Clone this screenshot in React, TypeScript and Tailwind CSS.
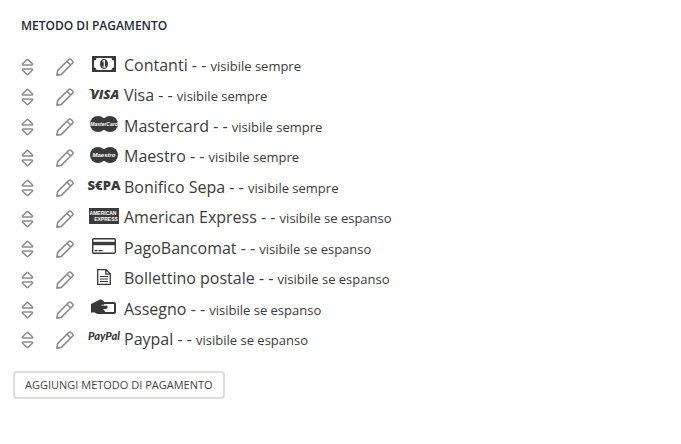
import type { ReactNode } from "react";

type Method = {
  name: string;
  visibility: string;
  icon: ReactNode;
};

const CashIcon = () => (
  <svg width="24" height="16" viewBox="0 0 24 16" aria-hidden="true">
    <rect width="24" height="16" fill="#3a3a3a" />
    <path d="M4.500 2h15a2.500 2.500 0 0 0 2.500 2.500v7a2.500 2.500 0 0 0-2.500 2.500h-15A2.500 2.500 0 0 0 2 11.500v-7A2.500 2.500 0 0 0 4.500 2z" fill="#fff" />
    <ellipse cx="12" cy="8" rx="4" ry="5" fill="#3a3a3a" />
    <path d="M10.500 5.500L12.300 4.500V11M10.500 11h3.600" fill="none" stroke="#fff" strokeWidth="1.2" />
  </svg>
);

const VisaIcon = () => (
  <svg width="34" height="16" viewBox="0 0 34 16" aria-hidden="true">
    <path d="M1 3h5l1 4C6 5 4 4 1 3z" fill="#3a3a3a" />
    <text x="18" y="13" textAnchor="middle" fill="#3a3a3a" className="font-['Open_Sans',sans-serif] text-[13px] font-extrabold italic">
      VISA
    </text>
  </svg>
);

const CirclesIcon = ({ label, size }: { label: string; size: string }) => (
  <svg width="28" height="16" viewBox="0 0 28 16" aria-hidden="true">
    <circle cx="8" cy="8" r="8" fill="#3a3a3a" />
    <circle cx="20" cy="8" r="8" fill="#3a3a3a" />
    <rect x="8" y="2" width="12" height="12" fill="#3a3a3a" />
    <text x="14" y="10" textAnchor="middle" fill="#fff" className={`font-['Liberation_Sans',sans-serif] font-bold italic ${size}`}>
      {label}
    </text>
  </svg>
);

const SepaIcon = () => (
  <svg width="34" height="16" viewBox="0 0 34 16" aria-hidden="true">
    <text x="17" y="13" textAnchor="middle" fill="#3a3a3a" className="font-['Open_Sans',sans-serif] text-[13px] font-extrabold">
      S€PA
    </text>
  </svg>
);

const AmexIcon = () => (
  <svg width="30" height="16" viewBox="0 0 30 16" aria-hidden="true">
    <rect width="30" height="16" fill="#3a3a3a" />
    <text x="14" y="7" textAnchor="middle" fill="#fff" className="font-['Liberation_Sans',sans-serif] text-[5px] font-bold">
      AMERICAN
    </text>
    <text x="17" y="13" textAnchor="middle" fill="#fff" className="font-['Liberation_Sans',sans-serif] text-[5px] font-bold">
      EXPRESS
    </text>
  </svg>
);

const CardIcon = () => (
  <svg width="24" height="16" viewBox="0 0 24 16" fill="none" stroke="#3a3a3a" aria-hidden="true">
    <rect x="0.7" y="0.7" width="22.600" height="14.600" rx="1.2" strokeWidth="1.4" />
    <path d="M1 5.500h22" strokeWidth="3.4" />
    <path d="M2.500 12.600h3M6.500 12.600h4" strokeWidth="1.3" />
  </svg>
);

const SlipIcon = () => (
  <svg width="14" height="16" viewBox="0 0 14 16" fill="none" stroke="#3a3a3a" strokeWidth="1.3" aria-hidden="true">
    <path d="M0.700 0.700H9l4.300 4.300v10.300H0.700zM8.800 0.700v4.500h4.500" />
    <path d="M3 7.500h8M3 10h8M3 12.500h8" strokeWidth="1.2" />
  </svg>
);

const ChequeIcon = () => (
  <svg width="25" height="16" viewBox="0 0 25 16" aria-hidden="true">
    <rect x="10" y="4" width="14" height="10" rx="1" fill="#fff" stroke="#3a3a3a" strokeWidth="2" />
    <path
      d="M0 5L8 1c1-.5 2-.6 3 0l3 2.500-1 3h2c2.200 0 2.200 3.500 0 3.500h-3l1 1c1.500 1 1.500 4 0 4H7.500c-1.500 0-2.500-.5-3.500-1.500H0z"
      fill="#3a3a3a"
    />
    <path d="M10.500 6.200h4.500" stroke="#fff" strokeWidth="0.700" />
  </svg>
);

const PaypalIcon = () => (
  <svg width="34" height="16" viewBox="0 0 34 16" aria-hidden="true">
    <text x="17" y="11" textAnchor="middle" fill="#3a3a3a" className="font-[Lato,sans-serif] text-[11px] font-black italic">
      PayPal
    </text>
  </svg>
);

const SortIcon = () => (
  <svg width="13" height="18" viewBox="0 0 13 18" fill="none" stroke="#8c8c8c" strokeWidth="1.6" strokeLinejoin="round" aria-hidden="true">
    <path d="M5.800 1.700L1.700 5.700c-.5.6-.2 1.300.6 1.300h8.400c.8 0 1.100-.7.6-1.300L7.200 1.700a1 1 0 0 0-1.400 0z" />
    <path d="M5.800 16.300L1.700 12.300c-.5-.6-.2-1.300.6-1.300h8.400c.8 0 1.100.7.6 1.300L7.200 16.300a1 1 0 0 1-1.400 0z" />
  </svg>
);

const PencilIcon = () => (
  <svg width="18" height="18" viewBox="0 0 18 18" fill="none" stroke="#8c8c8c" strokeWidth="1.6" strokeLinejoin="round" aria-hidden="true">
    <path d="M0.900 17.100l.7-4.500L12.700 1.500c.7-.7 1.600-.7 2.300 0l1.500 1.500c.7.7.7 1.600 0 2.300L5.400 16.400z" />
    <path d="M11 3.200L14.800 7" />
  </svg>
);

const methods: Method[] = [
  { name: "Contanti", visibility: "visibile sempre", icon: <CashIcon /> },
  { name: "Visa", visibility: "visibile sempre", icon: <VisaIcon /> },
  { name: "Mastercard", visibility: "visibile sempre", icon: <CirclesIcon label="MasterCard" size="text-[5px]" /> },
  { name: "Maestro", visibility: "visibile sempre", icon: <CirclesIcon label="Maestro" size="text-[6px]" /> },
  { name: "Bonifico Sepa", visibility: "visibile sempre", icon: <SepaIcon /> },
  { name: "American Express", visibility: "visibile se espanso", icon: <AmexIcon /> },
  { name: "PagoBancomat", visibility: "visibile se espanso", icon: <CardIcon /> },
  { name: "Bollettino postale", visibility: "visibile se espanso", icon: <SlipIcon /> },
  { name: "Assegno", visibility: "visibile se espanso", icon: <ChequeIcon /> },
  { name: "Paypal", visibility: "visibile se espanso", icon: <PaypalIcon /> },
];

const MethodRow = ({ method }: { method: Method }) => (
  <li className="flex items-center">
    <button type="button" aria-label={`Sposta ${method.name}`} className="w-[13px] pt-[3px] cursor-grab">
      <SortIcon />
    </button>
    <button type="button" aria-label={`Modifica ${method.name}`} className="ml-[22px] pt-[3px] cursor-pointer">
      <PencilIcon />
    </button>
    <span className="ml-3 w-[35px] pb-[3px] flex justify-center">{method.icon}</span>
    <span className="ml-[3px] text-base leading-[30px]">
      {method.name} - - <small className="text-[13px] leading-4">{method.visibility}</small>
    </span>
  </li>
);

const App = () => {
  return (
    <main className="bg-white p-3 font-['Open_Sans',sans-serif] text-[#3c3c3c]">
      <h2 className="ml-[9px] mt-1 text-[12px] leading-5 font-semibold text-[#1f2937]">METODO DI PAGAMENTO</h2>
      <ul className="ml-[9px] mt-[14px] min-h-[304px] flex flex-col justify-between">
        {methods.map((method) => (
          <MethodRow key={method.name} method={method} />
        ))}
      </ul>
      <button
        type="button"
        className="ml-px mt-[17px] h-7 px-[10px] border-2 border-[#dddddd] rounded text-[11px] text-[#444444] cursor-pointer"
      >
        AGGIUNGI METODO DI PAGAMENTO
      </button>
    </main>
  );
};

export default App;
